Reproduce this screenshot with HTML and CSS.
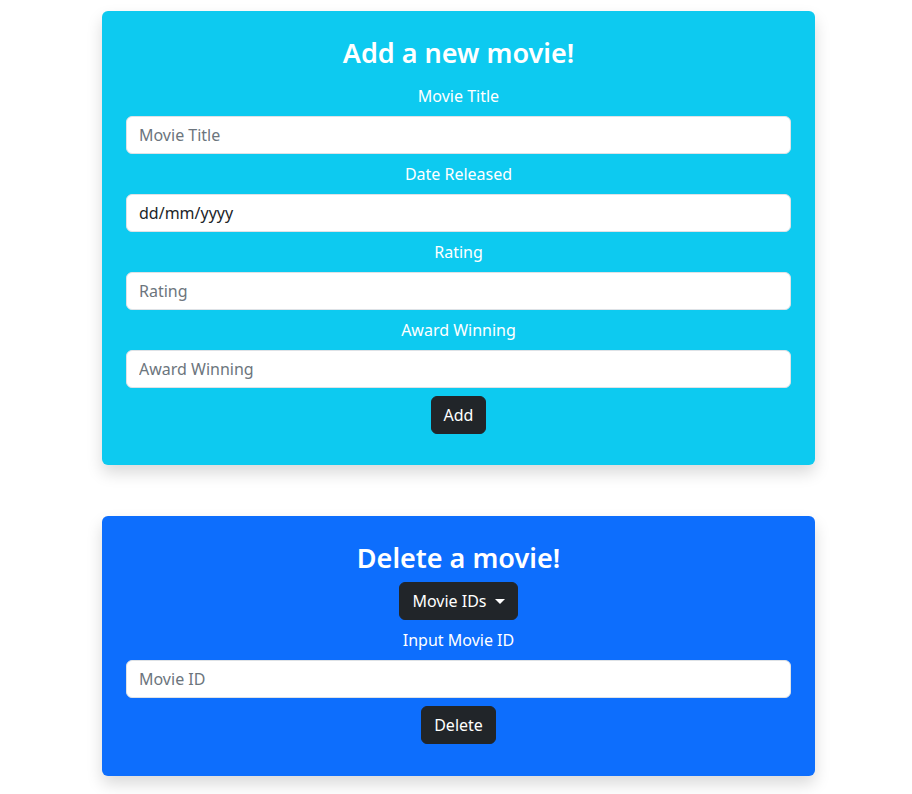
FILE: index.html
```html
<!DOCTYPE html>
<html lang="en">
<head>
<meta charset="utf-8">
<title>Movies</title>
<link rel="stylesheet" href="styles.css">
</head>
<body>
<div class="page">
  <section class="card card-info">
    <h2 class="card-title">Add a new movie!</h2>
    <form class="form">
      <label class="label" for="title">Movie Title</label>
      <input class="input" id="title" type="text" placeholder="Movie Title">
      <label class="label" for="date">Date Released</label>
      <input class="input input-date" id="date" type="text" value="dd/mm/yyyy">
      <label class="label" for="rating">Rating</label>
      <input class="input" id="rating" type="text" placeholder="Rating">
      <label class="label" for="award">Award Winning</label>
      <input class="input" id="award" type="text" placeholder="Award Winning">
      <button class="btn" type="button">Add</button>
    </form>
  </section>

  <section class="card card-primary">
    <h2 class="card-title">Delete a movie!</h2>
    <form class="form">
      <button class="btn btn-dropdown" type="button">Movie IDs<span class="caret"></span></button>
      <label class="label" for="mid">Input Movie ID</label>
      <input class="input" id="mid" type="text" placeholder="Movie ID">
      <button class="btn" type="button">Delete</button>
    </form>
  </section>
</div>
</body>
</html>
```
FILE: styles.css
```css
* { box-sizing: border-box; }
html, body { margin: 0; padding: 0; background: #fff; }
body {
  font-family: "Noto Sans", "Open Sans", sans-serif;
  font-size: 16px;
  line-height: 1.5;
  color: #212529;
}
.page {
  width: 718px;
  margin: 0 auto;
  padding: 11px 0 20px 5px;
  display: flex;
  flex-direction: column;
  gap: 51px;
}
.card {
  border-radius: 6px;
  padding: 24px 24px 23px;
  color: #fff;
  box-shadow: 0 8px 16px rgba(0, 0, 0, 0.15);
  text-align: center;
}
.card-info { background: #0dcaf0; }
.card-primary { background: #0d6efd; padding-bottom: 24px; }
.card-title {
  margin: 0 0 8px;
  font-size: 27px;
  line-height: 35px;
  font-weight: 600;
}
.card-primary .card-title { margin-bottom: 7px; }
.form {
  display: flex;
  flex-direction: column;
  align-items: center;
}
.card-info .form { padding-top: 6px; }
.label {
  display: block;
  line-height: 24px;
  margin-bottom: 8px;
}
.input {
  width: 100%;
  height: 38px;
  padding: 6px 12px;
  border: 1px solid #dee2e6;
  border-radius: 6px;
  font: inherit;
  color: #212529;
  background: #fff;
  margin-bottom: 8px;
}
.input::placeholder { color: #6c757d; }
.btn {
  display: inline-flex;
  align-items: center;
  height: 38px;
  padding: 6px 12px;
  border: 1px solid #212529;
  border-radius: 6px;
  background: #212529;
  color: #fff;
  font: inherit;
  margin-bottom: 8px;
}
.caret {
  display: inline-block;
  margin-left: 8px;
  border-top: 5px solid #fff;
  border-left: 5px solid transparent;
  border-right: 5px solid transparent;
}
```
